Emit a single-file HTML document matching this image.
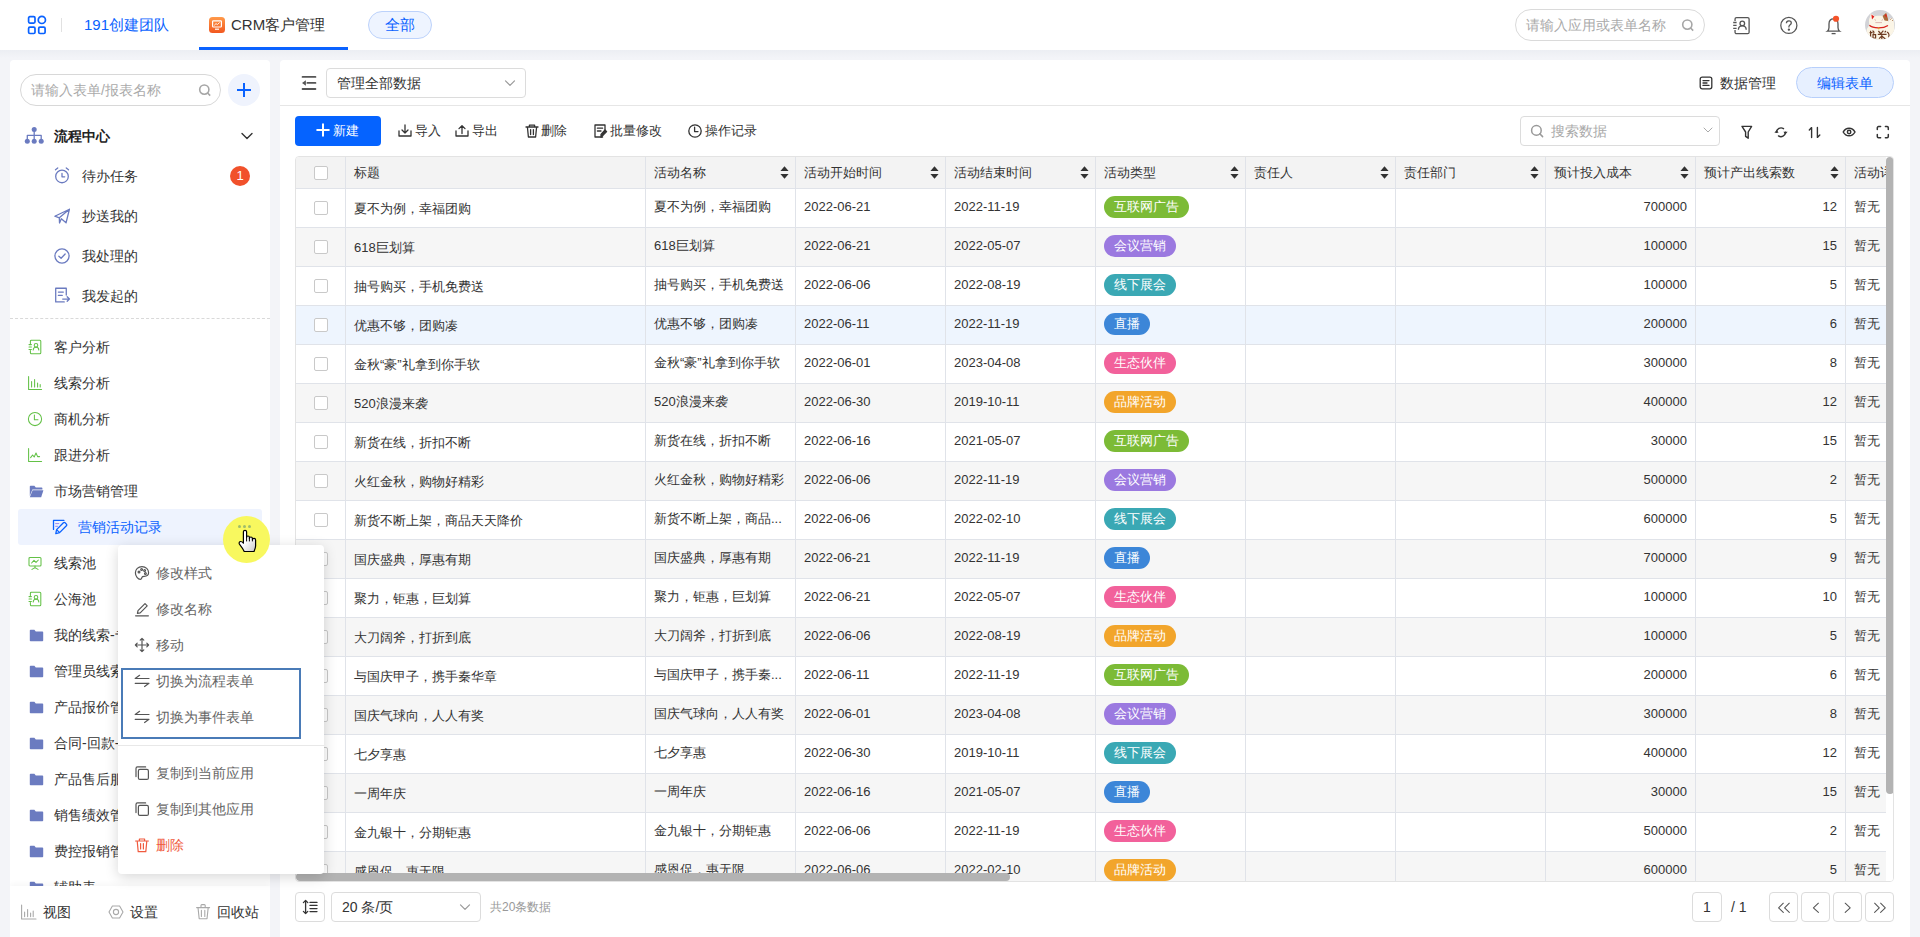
<!DOCTYPE html>
<html><head><meta charset="utf-8"><title>CRM</title>
<style>
*{box-sizing:border-box;margin:0;padding:0}
html,body{width:1920px;height:937px;overflow:hidden}
body{background:#f3f4f8;font-family:"Liberation Sans",sans-serif;color:#333;position:relative}
.abs{position:absolute}
svg{display:block}
/* header */
#hdr{position:absolute;left:0;top:0;width:1920px;height:50px;background:#fff}
.t15{font-size:15px;line-height:20px;white-space:nowrap}
.t14{font-size:14px;line-height:20px;white-space:nowrap}
.t13{font-size:13px;line-height:18px;white-space:nowrap}
.t12{font-size:12px;line-height:16px;white-space:nowrap}
/* sidebar */
#side{position:absolute;left:10px;top:60px;width:260px;height:877px;background:#fff;border-radius:4px 4px 0 0;overflow:hidden}
.sitem{position:absolute;left:0;width:260px;height:36px}
.sitem .ic{position:absolute}
.sitem .tx{position:absolute;top:8px;font-size:14px;line-height:20px;color:#333;white-space:nowrap}
/* main */
#main{position:absolute;left:280px;top:60px;width:1630px;height:877px;background:#fff;border-radius:4px 4px 0 0}
/* table */
#tbl{position:absolute;left:295px;top:156px;width:1599px;height:726px;border:1px solid #e3e3e3;border-radius:4px;overflow:hidden;background:#fff}
.thead{position:absolute;left:0;top:0;width:1598px;height:32px;background:#f3f3f3;border-bottom:1px solid #e0e3e9}
.tr{position:absolute;left:0;width:1598px;height:39px;background:#fff;border-bottom:1px solid #e0e3e9}
.tr.odd{background:#f6f6f6}
.tr.hov{background:#eef5fe}
.cell{position:absolute;top:0;height:100%;border-right:1px solid #e0e3e9;font-size:13px;color:#333;white-space:nowrap;overflow:hidden;padding:0 8px;display:flex;align-items:center}
.cell span{position:relative}
.cell .dg{top:-2px}
.cell .cj{top:-1px}
.cell .tt{top:1px}
.th{justify-content:space-between;padding-right:6px}
.ck{justify-content:center;padding:0}
.cb{display:block;width:14px;height:14px;border:1px solid #c9c9c9;border-radius:2px;background:#fff}
.num{justify-content:flex-end}
.tag{display:inline-block;position:relative;top:-1px;height:22px;line-height:22px;border-radius:11px;padding:0 10px;color:#fff;font-size:13px;font-weight:normal}
.hscroll{position:absolute;left:0;top:716px;width:714px;height:8px;background:#b3b3b3;border-radius:4px}
.vtrack{position:absolute;left:1590px;top:0;width:8px;height:724px;background:#fff}
.vscroll{position:absolute;left:1590px;top:0;width:8px;height:637px;background:#b3b3b3;border-radius:4px}
.btn30{position:absolute;width:29px;height:30px;border:1px solid #dcdcdc;border-radius:4px;background:#fff}

#hshadow{position:absolute;left:0;top:50px;width:1920px;height:8px;background:linear-gradient(#eceef3,#f3f4f8)}

</style></head>
<body>
<!-- ============ HEADER ============ -->
<div id="hdr">
  <svg class="abs" style="left:26px;top:14px" width="22" height="22" viewBox="0 0 22 22" fill="none" stroke="#0a62ff" stroke-width="1.7">
    <rect x="2.6" y="2.7" width="6.4" height="6.4" rx="1.3"/>
    <circle cx="15.85" cy="5.9" r="3.6"/>
    <rect x="2.6" y="13.1" width="6.4" height="6.4" rx="1.3"/>
    <rect x="12.7" y="13.1" width="6.4" height="6.4" rx="1.3"/>
  </svg>
  <div class="abs" style="left:61px;top:18px;width:1px;height:14px;background:#e1e1e1"></div>
  <div class="abs t15" style="left:84px;top:15px;color:#0a62ff">191创建团队</div>
  <svg class="abs" style="left:209px;top:17px" width="16" height="16" viewBox="0 0 16 16">
    <defs><linearGradient id="og" x1="0" y1="0" x2="0" y2="1"><stop offset="0" stop-color="#ff9a4a"/><stop offset="1" stop-color="#f2571f"/></linearGradient></defs>
    <rect x="0" y="0" width="16" height="16" rx="3.5" fill="url(#og)"/>
    <rect x="3.6" y="3.8" width="8.8" height="6.2" rx="0.8" fill="none" stroke="#fff" stroke-width="1.2"/>
    <path d="M5.2 8.4 L7 6.6 L8.4 7.6 L10.6 5.4" fill="none" stroke="#fff" stroke-width="0.9"/>
    <path d="M6 12.2 H10" stroke="#fff" stroke-width="1.2"/>
  </svg>
  <div class="abs t15" style="left:231px;top:15px;color:#333">CRM客户管理</div>
  <div class="abs" style="left:199px;top:47px;width:149px;height:3px;background:#0a62ff"></div>
  <div class="abs t15" style="left:368px;top:11px;width:64px;height:28px;border:1px solid #bcd2fb;background:#eef4ff;border-radius:14px;color:#0a62ff;text-align:center;line-height:26px">全部</div>

  <div class="abs" style="left:1515px;top:9px;width:190px;height:32px;border:1px solid #dadada;border-radius:16px"></div>
  <div class="abs t14" style="left:1526px;top:15px;color:#aaa">请输入应用或表单名称</div>
  <svg class="abs" style="left:1681px;top:18px" width="14" height="14" viewBox="0 0 14 14" fill="none" stroke="#a6a6a6" stroke-width="1.6">
    <circle cx="6.3" cy="6.6" r="4.6"/><path d="M9.6 10 L12.2 12.6"/>
  </svg>

  <svg class="abs" style="left:1730px;top:14px" width="22" height="22" viewBox="0 0 22 22" fill="none" stroke="#555" stroke-width="1.3">
    <path d="M5.05 7 V5.1 a1.5 1.5 0 0 1 1.5 -1.5 H17.6 a1.5 1.5 0 0 1 1.5 1.5 V18.2 a1.5 1.5 0 0 1 -1.5 1.5 H6.55 a1.5 1.5 0 0 1 -1.5 -1.5 V16"/>
    <path d="M3.2 8.5 H6.6 M3.2 11.4 H6.6 M3.2 14.3 H6.6"/>
    <circle cx="12.3" cy="9.4" r="2.3"/>
    <path d="M8.4 15.8 C8.4 13.2 10 11.8 12.3 11.8 C14.6 11.8 16.2 13.2 16.2 15.8"/>
  </svg>
  <svg class="abs" style="left:1778px;top:14px" width="22" height="22" viewBox="0 0 22 22" fill="none" stroke="#555" stroke-width="1.25">
    <circle cx="10.85" cy="11.4" r="8.05"/>
    <path d="M8.4 9.2 C8.4 7.6 9.6 6.8 10.9 6.8 C12.3 6.8 13.3 7.7 13.3 8.9 C13.3 10.6 10.9 10.9 10.9 12.8 V13.4"/>
    <circle cx="10.9" cy="15.6" r="0.55" fill="#555"/>
  </svg>
  <svg class="abs" style="left:1822px;top:14px" width="22" height="22" viewBox="0 0 22 22" fill="none" stroke="#555" stroke-width="1.3">
    <path d="M5.4 17.2 C6.6 16.4 7 15.6 7 13.6 V10 C7 6.8 9 4.8 11.5 4.8 C14 4.8 16 6.8 16 10 V13.6 C16 15.6 16.4 16.4 17.6 17.2 Z"/>
    <path d="M9.6 19.6 H13.6"/>
    <circle cx="14" cy="4.75" r="3.1" fill="#f4532a" stroke="none"/>
  </svg>
  <svg class="abs" style="left:1865px;top:10px" width="30" height="30" viewBox="0 0 30 30">
    <defs><clipPath id="avc"><circle cx="15" cy="15" r="15"/></clipPath></defs>
    <g clip-path="url(#avc)">
    <rect width="30" height="30" fill="#d2d3d7"/>
    <path d="M1.2 30 L1.6 20 C2.4 17.5 3.8 16 4.4 15 C3.6 12 3.8 9 5 7 L5.8 3.4 L10 6.2 C12 5.6 16 5.6 18 6 L21.2 2.8 L22.8 8 C23.4 9.5 23.4 11 23.2 12.5 L24.4 9.4 C25.2 7.8 27.4 7.8 28 9.2 C29.2 12 29.6 16 29.2 20 L28.8 30 Z" fill="#fbf5e6"/>
    <path d="M6.4 4.6 L9.4 6.6 L7 9.4 Z" fill="#e41f1c"/>
    <path d="M17.6 6 L21.2 2.8 L22.8 8 C23.2 9.4 23.2 10.4 22.8 11 L19.6 10.4 C18.8 9 18.2 7.4 17.6 6Z" fill="#a96b3d"/>
    <path d="M19.6 5.4 L21.2 3.8 L22 7.8 Z" fill="#e41f1c"/>
    <path d="M9.6 9.6 L11 10.4 M16.6 10.4 L18 9.6 M10.4 12.6 H17" stroke="#c98b8b" stroke-width="0.6"/>
    <path d="M4.4 15.2 C8 18.6 18 18.8 23 15.4" fill="none" stroke="#d9231d" stroke-width="1.2"/>
    <circle cx="13.6" cy="18.4" r="0.9" fill="#e0a92c"/>
    <path d="M25.4 9.6 L26.4 8.6 M27 11 L27.8 10.2" stroke="#a96b3d" stroke-width="0.9"/>
    <path d="M5.6 20.8 V28 M4.6 22.6 H7.6 M7.4 20.8 C9 21 9.4 22.4 8.4 23.6 M8 24.6 H10.6 V28 H8Z M13.4 21 L15.4 23.4 M18.4 20.6 L15 24.6 M12.8 24.4 H21.6 M16.8 24.6 V29 M14 28.6 L16.8 26 L20.4 29 M19.6 22.4 L21 21 M22 22 C24 23 24.4 25 23.6 27.6" stroke="#6e3b21" stroke-width="1.2" fill="none"/>
    </g>
  </svg>
</div>

<div id="hshadow"></div>
<!-- ============ SIDEBAR ============ -->
<div id="side">
  <div class="abs" style="left:10px;top:14px;width:201px;height:32px;border:1px solid #d8d8d8;border-radius:16px"></div>
  <div class="abs t14" style="left:21px;top:20px;color:#aaa">请输入表单/报表名称</div>
  <svg class="abs" style="left:188px;top:23px" width="14" height="14" viewBox="0 0 14 14" fill="none" stroke="#a6a6a6" stroke-width="1.6">
    <circle cx="6.3" cy="6.6" r="4.6"/><path d="M9.6 10 L12.2 12.6"/>
  </svg>
  <div class="abs" style="left:218px;top:14px;width:32px;height:32px;border-radius:16px;background:#eff3fd"></div>
  <svg class="abs" style="left:226px;top:22px" width="16" height="16" viewBox="0 0 16 16" stroke="#0a62ff" stroke-width="2"><path d="M8 1 V15 M1 8 H15"/></svg>

  <svg class="abs" style="left:10px;top:62px" width="30" height="28" viewBox="0 0 30 28" fill="#6b7bc0" stroke="none" stroke-width="1.3" stroke-linecap="round" stroke-linejoin="round"><circle cx="14.2" cy="7.6" r="2.5"/><circle cx="7.3" cy="19.3" r="2.5"/><circle cx="14.2" cy="19.3" r="2.5"/><circle cx="21.2" cy="19.3" r="2.5"/></svg>
<svg class="abs" style="left:10px;top:62px" width="30" height="28" viewBox="0 0 30 28" fill="none" stroke="#6b7bc0" stroke-width="1.3" stroke-linecap="round" stroke-linejoin="round"><path d="M14.2 7.6 V19.3 M7.3 19.3 V13.4 H21.2 V19.3"/></svg>
<div class="abs" style="left:44px;top:66px;font-size:14px;line-height:20px;color:#222;white-space:nowrap;font-weight:bold">流程中心</div>
<svg class="abs" style="left:230px;top:70px" width="14" height="12" viewBox="0 0 14 12" fill="none" stroke="#333" stroke-width="1.4" stroke-linecap="round" stroke-linejoin="round"><path d="M2 3.5 L7 8.5 L12 3.5"/></svg>
<svg class="abs" style="left:43px;top:106px" width="18" height="18" viewBox="0 0 16 16" fill="none" stroke="#6b7bc0" stroke-width="1.15" stroke-linecap="round" stroke-linejoin="round"><circle cx="8" cy="9.3" r="5.6"/><path d="M8 6.6 V9.6 H10.4 M2.2 3.4 L4.2 1.8 M13.8 3.4 L11.8 1.8"/></svg>
<div class="abs" style="left:72px;top:105.5px;font-size:14px;line-height:20px;color:#333;white-space:nowrap;">待办任务</div>
<svg class="abs" style="left:43px;top:147px" width="18" height="18" viewBox="0 0 16 16" fill="none" stroke="#6b7bc0" stroke-width="1.15" stroke-linecap="round" stroke-linejoin="round"><path d="M1.6 8.2 L14.6 2 L11.6 14 L7.4 10.4 L5.8 14.2 L5.6 9.6 Z M5.6 9.6 L14.6 2"/></svg>
<div class="abs" style="left:72px;top:146px;font-size:14px;line-height:20px;color:#333;white-space:nowrap;">抄送我的</div>
<svg class="abs" style="left:43px;top:187px" width="18" height="18" viewBox="0 0 16 16" fill="none" stroke="#6b7bc0" stroke-width="1.15" stroke-linecap="round" stroke-linejoin="round"><circle cx="8" cy="8" r="6.3"/><path d="M5.2 8.2 L7.2 10 L10.8 6.2"/></svg>
<div class="abs" style="left:72px;top:186px;font-size:14px;line-height:20px;color:#333;white-space:nowrap;">我处理的</div>
<svg class="abs" style="left:43px;top:226px" width="18" height="18" viewBox="0 0 16 16" fill="none" stroke="#6b7bc0" stroke-width="1.15" stroke-linecap="round" stroke-linejoin="round"><path d="M11.8 8 V2 H2.4 V14.2 H10 M4.8 5.4 H9.2 M4.8 8.4 H8.2 M8.6 11.6 H14.6 L12.6 9.6 M14.6 11.6 L12.6 13.6"/></svg>
<div class="abs" style="left:72px;top:225.5px;font-size:14px;line-height:20px;color:#333;white-space:nowrap;">我发起的</div>
<div class="abs" style="left:220px;top:106px;width:20px;height:20px;border-radius:10px;background:#f1512b;color:#fff;font-size:13px;line-height:20px;text-align:center">1</div>
<div class="abs" style="left:0;top:258px;width:260px;height:0;border-top:1px dashed #d9d9d9"></div>
<svg class="abs" style="left:17px;top:279px" width="16" height="16" viewBox="0 0 16 16" fill="none" stroke="#63c146" stroke-width="1.05" stroke-linecap="round" stroke-linejoin="round"><path d="M3.4 4.5 V2.2 a1 1 0 0 1 1 -1 H12.8 a1 1 0 0 1 1 1 V13.8 a1 1 0 0 1 -1 1 H4.4 a1 1 0 0 1 -1 -1 V11.5 M2 5.6 H4.4 M2 8 H4.4 M2 10.4 H4.4"/><circle cx="9" cy="6.2" r="1.8"/><path d="M6.2 11 C6.2 9 7.4 8.2 9 8.2 C10.6 8.2 11.8 9 11.8 11"/></svg>
<div class="abs" style="left:44px;top:277px;font-size:14px;line-height:20px;color:#333;white-space:nowrap;">客户分析</div>
<svg class="abs" style="left:17px;top:315px" width="16" height="16" viewBox="0 0 16 16" fill="none" stroke="#63c146" stroke-width="1.05" stroke-linecap="round" stroke-linejoin="round"><path d="M1.6 1.6 V14.4 H14.6 M4.6 12 V6.6 M7.6 12 V4.4 M10.6 12 V8 M13.2 12 V9.4"/></svg>
<div class="abs" style="left:44px;top:313px;font-size:14px;line-height:20px;color:#333;white-space:nowrap;">线索分析</div>
<svg class="abs" style="left:17px;top:351px" width="16" height="16" viewBox="0 0 16 16" fill="none" stroke="#63c146" stroke-width="1.05" stroke-linecap="round" stroke-linejoin="round"><circle cx="8" cy="8" r="6.6"/><path d="M7.4 4 V8.8 H11"/></svg>
<div class="abs" style="left:44px;top:349px;font-size:14px;line-height:20px;color:#333;white-space:nowrap;">商机分析</div>
<svg class="abs" style="left:17px;top:387px" width="16" height="16" viewBox="0 0 16 16" fill="none" stroke="#63c146" stroke-width="1.05" stroke-linecap="round" stroke-linejoin="round"><path d="M1.6 1.6 V14.4 H14.6 M3.6 10.6 L5.6 8 L7.2 10 L9 6 L10.6 9.6 L12.6 9.6"/></svg>
<div class="abs" style="left:44px;top:385px;font-size:14px;line-height:20px;color:#333;white-space:nowrap;">跟进分析</div>
<svg class="abs" style="left:18.5px;top:424.5px" width="15" height="13" viewBox="0 0 15 13" fill="#6b7bc0" stroke="none" stroke-width="1.3" stroke-linecap="round" stroke-linejoin="round"><path d="M0.8 1.6 a0.8 0.8 0 0 1 0.8 -0.8 H5.4 L6.8 2.4 H12.6 a0.8 0.8 0 0 1 0.8 0.8 V4.4 H3.4 L0.8 11 Z" /><path d="M3.6 5.2 H14.4 L12.2 12.2 H0.8 Z"/></svg>
<div class="abs" style="left:44px;top:421px;font-size:14px;line-height:20px;color:#333;white-space:nowrap;">市场营销管理</div>
<svg class="abs" style="left:17px;top:495px" width="16" height="16" viewBox="0 0 16 16" fill="none" stroke="#63c146" stroke-width="1.05" stroke-linecap="round" stroke-linejoin="round"><rect x="2" y="2.4" width="12" height="8.6" rx="1"/><path d="M4.6 8 L7 5.4 L9 7.4 L11.4 5 M8 11 V13 M5 14.4 L8 12.6 L11 14.4"/></svg>
<div class="abs" style="left:44px;top:493px;font-size:14px;line-height:20px;color:#333;white-space:nowrap;">线索池</div>
<svg class="abs" style="left:17px;top:531px" width="16" height="16" viewBox="0 0 16 16" fill="none" stroke="#63c146" stroke-width="1.05" stroke-linecap="round" stroke-linejoin="round"><path d="M3.4 4.5 V2.2 a1 1 0 0 1 1 -1 H12.8 a1 1 0 0 1 1 1 V13.8 a1 1 0 0 1 -1 1 H4.4 a1 1 0 0 1 -1 -1 V11.5 M2 5.6 H4.4 M2 8 H4.4 M2 10.4 H4.4"/><circle cx="9" cy="6.2" r="1.8"/><path d="M6.2 11 C6.2 9 7.4 8.2 9 8.2 C10.6 8.2 11.8 9 11.8 11"/></svg>
<div class="abs" style="left:44px;top:529px;font-size:14px;line-height:20px;color:#333;white-space:nowrap;">公海池</div>
<svg class="abs" style="left:18.5px;top:568.5px" width="15" height="13" viewBox="0 0 15 13" fill="#6b7bc0" stroke="none" stroke-width="1.3" stroke-linecap="round" stroke-linejoin="round"><path d="M0.8 1.6 a0.8 0.8 0 0 1 0.8 -0.8 H5.4 L6.8 2.4 H13.4 a0.8 0.8 0 0 1 0.8 0.8 V11.4 a0.8 0.8 0 0 1 -0.8 0.8 H1.6 a0.8 0.8 0 0 1 -0.8 -0.8 Z"/></svg>
<div class="abs" style="left:44px;top:565px;font-size:14px;line-height:20px;color:#333;white-space:nowrap;">我的线索-专员</div>
<svg class="abs" style="left:18.5px;top:604.5px" width="15" height="13" viewBox="0 0 15 13" fill="#6b7bc0" stroke="none" stroke-width="1.3" stroke-linecap="round" stroke-linejoin="round"><path d="M0.8 1.6 a0.8 0.8 0 0 1 0.8 -0.8 H5.4 L6.8 2.4 H13.4 a0.8 0.8 0 0 1 0.8 0.8 V11.4 a0.8 0.8 0 0 1 -0.8 0.8 H1.6 a0.8 0.8 0 0 1 -0.8 -0.8 Z"/></svg>
<div class="abs" style="left:44px;top:601px;font-size:14px;line-height:20px;color:#333;white-space:nowrap;">管理员线索管理</div>
<svg class="abs" style="left:18.5px;top:640.5px" width="15" height="13" viewBox="0 0 15 13" fill="#6b7bc0" stroke="none" stroke-width="1.3" stroke-linecap="round" stroke-linejoin="round"><path d="M0.8 1.6 a0.8 0.8 0 0 1 0.8 -0.8 H5.4 L6.8 2.4 H13.4 a0.8 0.8 0 0 1 0.8 0.8 V11.4 a0.8 0.8 0 0 1 -0.8 0.8 H1.6 a0.8 0.8 0 0 1 -0.8 -0.8 Z"/></svg>
<div class="abs" style="left:44px;top:637px;font-size:14px;line-height:20px;color:#333;white-space:nowrap;">产品报价管理</div>
<svg class="abs" style="left:18.5px;top:676.5px" width="15" height="13" viewBox="0 0 15 13" fill="#6b7bc0" stroke="none" stroke-width="1.3" stroke-linecap="round" stroke-linejoin="round"><path d="M0.8 1.6 a0.8 0.8 0 0 1 0.8 -0.8 H5.4 L6.8 2.4 H13.4 a0.8 0.8 0 0 1 0.8 0.8 V11.4 a0.8 0.8 0 0 1 -0.8 0.8 H1.6 a0.8 0.8 0 0 1 -0.8 -0.8 Z"/></svg>
<div class="abs" style="left:44px;top:673px;font-size:14px;line-height:20px;color:#333;white-space:nowrap;">合同-回款-开票</div>
<svg class="abs" style="left:18.5px;top:712.5px" width="15" height="13" viewBox="0 0 15 13" fill="#6b7bc0" stroke="none" stroke-width="1.3" stroke-linecap="round" stroke-linejoin="round"><path d="M0.8 1.6 a0.8 0.8 0 0 1 0.8 -0.8 H5.4 L6.8 2.4 H13.4 a0.8 0.8 0 0 1 0.8 0.8 V11.4 a0.8 0.8 0 0 1 -0.8 0.8 H1.6 a0.8 0.8 0 0 1 -0.8 -0.8 Z"/></svg>
<div class="abs" style="left:44px;top:709px;font-size:14px;line-height:20px;color:#333;white-space:nowrap;">产品售后服务</div>
<svg class="abs" style="left:18.5px;top:748.5px" width="15" height="13" viewBox="0 0 15 13" fill="#6b7bc0" stroke="none" stroke-width="1.3" stroke-linecap="round" stroke-linejoin="round"><path d="M0.8 1.6 a0.8 0.8 0 0 1 0.8 -0.8 H5.4 L6.8 2.4 H13.4 a0.8 0.8 0 0 1 0.8 0.8 V11.4 a0.8 0.8 0 0 1 -0.8 0.8 H1.6 a0.8 0.8 0 0 1 -0.8 -0.8 Z"/></svg>
<div class="abs" style="left:44px;top:745px;font-size:14px;line-height:20px;color:#333;white-space:nowrap;">销售绩效管理</div>
<svg class="abs" style="left:18.5px;top:784.5px" width="15" height="13" viewBox="0 0 15 13" fill="#6b7bc0" stroke="none" stroke-width="1.3" stroke-linecap="round" stroke-linejoin="round"><path d="M0.8 1.6 a0.8 0.8 0 0 1 0.8 -0.8 H5.4 L6.8 2.4 H13.4 a0.8 0.8 0 0 1 0.8 0.8 V11.4 a0.8 0.8 0 0 1 -0.8 0.8 H1.6 a0.8 0.8 0 0 1 -0.8 -0.8 Z"/></svg>
<div class="abs" style="left:44px;top:781px;font-size:14px;line-height:20px;color:#333;white-space:nowrap;">费控报销管理</div>
<svg class="abs" style="left:18.5px;top:820.5px" width="15" height="13" viewBox="0 0 15 13" fill="#6b7bc0" stroke="none" stroke-width="1.3" stroke-linecap="round" stroke-linejoin="round"><path d="M0.8 1.6 a0.8 0.8 0 0 1 0.8 -0.8 H5.4 L6.8 2.4 H13.4 a0.8 0.8 0 0 1 0.8 0.8 V11.4 a0.8 0.8 0 0 1 -0.8 0.8 H1.6 a0.8 0.8 0 0 1 -0.8 -0.8 Z"/></svg>
<div class="abs" style="left:44px;top:817px;font-size:14px;line-height:20px;color:#333;white-space:nowrap;">辅助表</div>
<div class="abs" style="left:8px;top:449px;width:244px;height:36px;background:#eef3fe;border-radius:3px"></div>
<svg class="abs" style="left:42px;top:459px" width="17" height="17" viewBox="0 0 17 17" fill="none" stroke="#0a62ff" stroke-width="1.3" stroke-linecap="round" stroke-linejoin="round"><path d="M1.5 10.4 V1.4 H11.9 M3.8 14.6 L4.6 10.6 L11.4 3.8 a1.2 1.2 0 0 1 1.7 0 L14.4 5.1 a1.2 1.2 0 0 1 0 1.7 L7.6 13.6 Z M4.6 10.6 L7.6 13.6"/></svg>
<svg class="abs" style="left:42px;top:459px" width="17" height="17" viewBox="0 0 17 17" fill="none" stroke="#8a7cf0" stroke-width="0.9" stroke-linecap="round" stroke-linejoin="round"><path d="M3.6 4.6 H6.8 M3.6 7.3 H5.5"/></svg>
<div class="abs" style="left:68px;top:457px;font-size:14px;line-height:20px;color:#0a62ff;white-space:nowrap;">营销活动记录</div>
<div class="abs" style="left:0;top:826px;width:260px;height:51px;background:#fff;box-shadow:0 -2px 6px rgba(0,0,0,0.04)"></div>
<svg class="abs" style="left:10px;top:844px" width="17" height="16" viewBox="0 0 17 16" fill="none" stroke="#a9a9a9" stroke-width="1.1" stroke-linecap="round" stroke-linejoin="round"><path d="M1.6 1 V15 H16 M4.6 12.6 V8 M7.6 12.6 V5.6 M10.6 12.6 V9 M13.2 12.6 V7"/></svg>
<div class="abs" style="left:33px;top:842px;font-size:14px;line-height:20px;color:#333;white-space:nowrap;">视图</div>
<svg class="abs" style="left:98px;top:844px" width="16" height="16" viewBox="0 0 16 16" fill="none" stroke="#a9a9a9" stroke-width="1.1" stroke-linecap="round" stroke-linejoin="round"><path d="M4.4 2 H11.6 L15 8 L11.6 14 H4.4 L1 8 Z"/><circle cx="8" cy="8" r="2.6"/></svg>
<div class="abs" style="left:120px;top:842px;font-size:14px;line-height:20px;color:#333;white-space:nowrap;">设置</div>
<svg class="abs" style="left:185px;top:843px" width="16" height="18" viewBox="0 0 16 18" fill="none" stroke="#a9a9a9" stroke-width="1.1" stroke-linecap="round" stroke-linejoin="round"><path d="M1.6 4.6 H14.6 M6 4.4 V2.4 a0.8 0.8 0 0 1 0.8 -0.8 H9.4 a0.8 0.8 0 0 1 0.8 0.8 V4.4 M3 4.6 L4.2 15.8 H12 L13.2 4.6 M6.4 7.4 V13.4 M9.8 7.4 V13.4"/></svg>
<div class="abs" style="left:207px;top:842px;font-size:14px;line-height:20px;color:#333;white-space:nowrap;">回收站</div>
</div>

<!-- ============ MAIN ============ -->
<div id="main">
  <div class="abs" style="left:0;top:45px;width:1630px;height:1px;background:#e6e6e6"></div>
<svg class="abs" style="left:20px;top:15px" width="18" height="16" viewBox="0 0 18 16" fill="none" stroke="#555" stroke-width="1.9" stroke-linecap="round" stroke-linejoin="round"><path d="M2.6 1.9 H15.4 M7.4 7.9 H15.4 M2.6 14 H15.4"/></svg>
<svg class="abs" style="left:20px;top:15px" width="18" height="16" viewBox="0 0 18 16" fill="#555" stroke="none" stroke-width="1.3" stroke-linecap="round" stroke-linejoin="round"><path d="M2 8 L5.9 5.3 V10.7 Z"/></svg>
<div class="abs" style="left:46px;top:8px;width:200px;height:30px;border:1px solid #dcdcdc;border-radius:4px"></div>
<div class="abs" style="left:57px;top:13px;font-size:14px;line-height:20px;color:#333;white-space:nowrap;">管理全部数据</div>
<svg class="abs" style="left:223px;top:17px" width="14" height="12" viewBox="0 0 14 12" fill="none" stroke="#999" stroke-width="1.2" stroke-linecap="round" stroke-linejoin="round"><path d="M2.5 3.8 L7 8.3 L11.5 3.8"/></svg>
<svg class="abs" style="left:1418px;top:15px" width="16" height="16" viewBox="0 0 16 16" fill="none" stroke="#333" stroke-width="1.3" stroke-linecap="round" stroke-linejoin="round"><rect x="2.2" y="2.2" width="11.6" height="11.6" rx="2"/><path d="M5 5.6 H11 M5 8 H9 M5 10.4 H11"/></svg>
<div class="abs" style="left:1440px;top:13px;font-size:14px;line-height:20px;color:#333;white-space:nowrap;">数据管理</div>
<div class="abs" style="left:1516px;top:7px;width:98px;height:31px;border:1px solid #b7cffb;background:#e7f0ff;border-radius:16px;text-align:center;font-size:14px;line-height:31px;color:#0a62ff">编辑表单</div>
<div class="abs" style="left:15px;top:56px;width:86px;height:30px;background:#0563ff;border-radius:4px"></div>
<svg class="abs" style="left:36px;top:63px" width="14" height="14" viewBox="0 0 14 14" fill="none" stroke="#fff" stroke-width="2" stroke-linecap="round" stroke-linejoin="round"><path d="M7 1.2 V12.8 M1.2 7 H12.8"/></svg>
<div class="abs" style="left:53px;top:61px;font-size:13px;line-height:20px;color:#fff;white-space:nowrap;">新建</div>
<svg class="abs" style="left:117px;top:63px" width="16" height="16" viewBox="0 0 16 16" fill="none" stroke="#333" stroke-width="1.3" stroke-linecap="round" stroke-linejoin="round"><path d="M2 8 V13 H14 V8 M8 2 V10 M5 7 L8 10 L11 7"/></svg>
<div class="abs" style="left:135px;top:61px;font-size:13px;line-height:20px;color:#333;white-space:nowrap;">导入</div>
<svg class="abs" style="left:174px;top:63px" width="16" height="16" viewBox="0 0 16 16" fill="none" stroke="#333" stroke-width="1.3" stroke-linecap="round" stroke-linejoin="round"><path d="M2 8 V13 H14 V8 M8 10.6 V2.6 M5 5.6 L8 2.6 L11 5.6"/></svg>
<div class="abs" style="left:192px;top:61px;font-size:13px;line-height:20px;color:#333;white-space:nowrap;">导出</div>
<svg class="abs" style="left:244px;top:63px" width="16" height="16" viewBox="0 0 16 16" fill="none" stroke="#333" stroke-width="1.3" stroke-linecap="round" stroke-linejoin="round"><path d="M2 4 H14 M5.4 4 V2.2 H10.6 V4 M3.4 4 L4.4 14 H11.6 L12.6 4 M6.6 6.6 V11.6 M9.4 6.6 V11.6"/></svg>
<div class="abs" style="left:261px;top:61px;font-size:13px;line-height:20px;color:#333;white-space:nowrap;">删除</div>
<svg class="abs" style="left:312px;top:63px" width="16" height="16" viewBox="0 0 16 16" fill="none" stroke="#333" stroke-width="1.3" stroke-linecap="round" stroke-linejoin="round"><path d="M10.6 14 H3 V2 H13 V9 M5.4 5.2 H10.6 M5.4 8 H9"/><path d="M9 14.2 L14.6 8.6 L13 7 L9 11.4 Z" fill="#333"/></svg>
<div class="abs" style="left:330px;top:61px;font-size:13px;line-height:20px;color:#333;white-space:nowrap;">批量修改</div>
<svg class="abs" style="left:407px;top:63px" width="16" height="16" viewBox="0 0 16 16" fill="none" stroke="#333" stroke-width="1.3" stroke-linecap="round" stroke-linejoin="round"><circle cx="8" cy="8" r="6.2"/><path d="M7.6 4.2 V8.6 H11"/></svg>
<div class="abs" style="left:425px;top:61px;font-size:13px;line-height:20px;color:#333;white-space:nowrap;">操作记录</div>
<div class="abs" style="left:1240px;top:56px;width:200px;height:30px;border:1px solid #dcdcdc;border-radius:4px"></div>
<svg class="abs" style="left:1250px;top:64px" width="14" height="14" viewBox="0 0 14 14" fill="none" stroke="#999" stroke-width="1.5" stroke-linecap="round" stroke-linejoin="round"><circle cx="6.4" cy="6.4" r="4.8"/><path d="M9.8 9.8 L12.6 12.6"/></svg>
<div class="abs" style="left:1271px;top:61px;font-size:14px;line-height:20px;color:#aaa;white-space:nowrap;">搜索数据</div>
<svg class="abs" style="left:1422px;top:65px" width="12" height="10" viewBox="0 0 12 10" fill="none" stroke="#aaa" stroke-width="1" stroke-linecap="round" stroke-linejoin="round"><path d="M2 3 L6 7 L10 3"/></svg>
<svg class="abs" style="left:1459px;top:64px" width="16" height="16" viewBox="0 0 16 16" fill="none" stroke="#333" stroke-width="1.4" stroke-linecap="round" stroke-linejoin="round"><path d="M3 2.4 H12.6 L9.2 8 V14.2 L6.6 12.4 V8 Z"/></svg>
<svg class="abs" style="left:1493px;top:64px" width="16" height="16" viewBox="0 0 16 16" fill="none" stroke="#333" stroke-width="1.4" stroke-linecap="round" stroke-linejoin="round"><path d="M3.6 8.3 A4.4 4.4 0 0 1 10.5 4.7 M12.4 8.3 A4.4 4.4 0 0 1 5.5 11.9"/><path d="M1.4 8.8 L3.6 6 L5.6 8.8 Z M14.6 7.8 L12.4 10.6 L10.4 7.8 Z" fill="#333" stroke="none"/></svg>
<svg class="abs" style="left:1526px;top:64px" width="16" height="16" viewBox="0 0 16 16" fill="none" stroke="#333" stroke-width="1.4" stroke-linecap="round" stroke-linejoin="round"><path d="M5.6 13.6 V3.6 L3.3 6 M11.4 3.4 V13.4 L13.8 11"/></svg>
<svg class="abs" style="left:1561px;top:64px" width="16" height="16" viewBox="0 0 16 16" fill="none" stroke="#333" stroke-width="1.5" stroke-linecap="round" stroke-linejoin="round"><path d="M2.2 8 C3.8 5.2 5.8 4.2 8.1 4.2 C10.4 4.2 12.4 5.2 14 8 C12.4 10.8 10.4 11.8 8.1 11.8 C5.8 11.8 3.8 10.8 2.2 8 Z"/><circle cx="8.1" cy="8" r="1.7"/></svg>
<svg class="abs" style="left:1595px;top:64px" width="16" height="16" viewBox="0 0 16 16" fill="none" stroke="#333" stroke-width="1.5" stroke-linecap="round" stroke-linejoin="round"><path d="M2.3 5.6 V3.8 a1.2 1.2 0 0 1 1.2 -1.2 H5.6 M10.4 2.6 H12.1 a1.2 1.2 0 0 1 1.2 1.2 V5.6 M13.3 10.4 V12.6 a1.2 1.2 0 0 1 -1.2 1.2 H10.4 M5.6 13.8 H3.5 a1.2 1.2 0 0 1 -1.2 -1.2 V10.4"/></svg>
</div>
<div id="tbl">
<div class="thead">
<div class="cell ck" style="left:0;width:50px"><i class="cb"></i></div>
<div class="cell th" style="left:50px;width:300px"><span>标题</span></div>
<div class="cell th" style="left:350px;width:150px"><span>活动名称</span><svg class="sort" width="9" height="13" viewBox="0 0 9 13"><path d="M4.5 0.3L8.6 5H0.4Z M4.5 12.7L8.6 8H0.4Z" fill="#333"/></svg></div>
<div class="cell th" style="left:500px;width:150px"><span>活动开始时间</span><svg class="sort" width="9" height="13" viewBox="0 0 9 13"><path d="M4.5 0.3L8.6 5H0.4Z M4.5 12.7L8.6 8H0.4Z" fill="#333"/></svg></div>
<div class="cell th" style="left:650px;width:150px"><span>活动结束时间</span><svg class="sort" width="9" height="13" viewBox="0 0 9 13"><path d="M4.5 0.3L8.6 5H0.4Z M4.5 12.7L8.6 8H0.4Z" fill="#333"/></svg></div>
<div class="cell th" style="left:800px;width:150px"><span>活动类型</span><svg class="sort" width="9" height="13" viewBox="0 0 9 13"><path d="M4.5 0.3L8.6 5H0.4Z M4.5 12.7L8.6 8H0.4Z" fill="#333"/></svg></div>
<div class="cell th" style="left:950px;width:150px"><span>责任人</span><svg class="sort" width="9" height="13" viewBox="0 0 9 13"><path d="M4.5 0.3L8.6 5H0.4Z M4.5 12.7L8.6 8H0.4Z" fill="#333"/></svg></div>
<div class="cell th" style="left:1100px;width:150px"><span>责任部门</span><svg class="sort" width="9" height="13" viewBox="0 0 9 13"><path d="M4.5 0.3L8.6 5H0.4Z M4.5 12.7L8.6 8H0.4Z" fill="#333"/></svg></div>
<div class="cell th" style="left:1250px;width:150px"><span>预计投入成本</span><svg class="sort" width="9" height="13" viewBox="0 0 9 13"><path d="M4.5 0.3L8.6 5H0.4Z M4.5 12.7L8.6 8H0.4Z" fill="#333"/></svg></div>
<div class="cell th" style="left:1400px;width:150px"><span>预计产出线索数</span><svg class="sort" width="9" height="13" viewBox="0 0 9 13"><path d="M4.5 0.3L8.6 5H0.4Z M4.5 12.7L8.6 8H0.4Z" fill="#333"/></svg></div>
<div class="cell th" style="left:1550px;width:150px"><span>活动详情</span></div>
</div>
<div class="tr" style="top:32px">
<div class="cell ck" style="left:0;width:50px"><i class="cb"></i></div>
<div class="cell" style="left:50px;width:300px"><span class="tt">夏不为例，幸福团购</span></div>
<div class="cell" style="left:350px;width:150px"><span class="cj">夏不为例，幸福团购</span></div>
<div class="cell" style="left:500px;width:150px"><span class="dg">2022-06-21</span></div>
<div class="cell" style="left:650px;width:150px"><span class="dg">2022-11-19</span></div>
<div class="cell" style="left:800px;width:150px"><b class="tag" style="background:#7cbb36">互联网广告</b></div>
<div class="cell" style="left:950px;width:150px"></div>
<div class="cell" style="left:1100px;width:150px"></div>
<div class="cell num" style="left:1250px;width:150px"><span class="dg">700000</span></div>
<div class="cell num" style="left:1400px;width:150px"><span class="dg">12</span></div>
<div class="cell" style="left:1550px;width:150px"><span class="cj">暂无</span></div>
</div>
<div class="tr odd" style="top:71px">
<div class="cell ck" style="left:0;width:50px"><i class="cb"></i></div>
<div class="cell" style="left:50px;width:300px"><span class="tt">618巨划算</span></div>
<div class="cell" style="left:350px;width:150px"><span class="cj">618巨划算</span></div>
<div class="cell" style="left:500px;width:150px"><span class="dg">2022-06-21</span></div>
<div class="cell" style="left:650px;width:150px"><span class="dg">2022-05-07</span></div>
<div class="cell" style="left:800px;width:150px"><b class="tag" style="background:#9b79e0">会议营销</b></div>
<div class="cell" style="left:950px;width:150px"></div>
<div class="cell" style="left:1100px;width:150px"></div>
<div class="cell num" style="left:1250px;width:150px"><span class="dg">100000</span></div>
<div class="cell num" style="left:1400px;width:150px"><span class="dg">15</span></div>
<div class="cell" style="left:1550px;width:150px"><span class="cj">暂无</span></div>
</div>
<div class="tr" style="top:110px">
<div class="cell ck" style="left:0;width:50px"><i class="cb"></i></div>
<div class="cell" style="left:50px;width:300px"><span class="tt">抽号购买，手机免费送</span></div>
<div class="cell" style="left:350px;width:150px"><span class="cj">抽号购买，手机免费送</span></div>
<div class="cell" style="left:500px;width:150px"><span class="dg">2022-06-06</span></div>
<div class="cell" style="left:650px;width:150px"><span class="dg">2022-08-19</span></div>
<div class="cell" style="left:800px;width:150px"><b class="tag" style="background:#3aa8b4">线下展会</b></div>
<div class="cell" style="left:950px;width:150px"></div>
<div class="cell" style="left:1100px;width:150px"></div>
<div class="cell num" style="left:1250px;width:150px"><span class="dg">100000</span></div>
<div class="cell num" style="left:1400px;width:150px"><span class="dg">5</span></div>
<div class="cell" style="left:1550px;width:150px"><span class="cj">暂无</span></div>
</div>
<div class="tr odd hov" style="top:149px">
<div class="cell ck" style="left:0;width:50px"><i class="cb"></i></div>
<div class="cell" style="left:50px;width:300px"><span class="tt">优惠不够，团购凑</span></div>
<div class="cell" style="left:350px;width:150px"><span class="cj">优惠不够，团购凑</span></div>
<div class="cell" style="left:500px;width:150px"><span class="dg">2022-06-11</span></div>
<div class="cell" style="left:650px;width:150px"><span class="dg">2022-11-19</span></div>
<div class="cell" style="left:800px;width:150px"><b class="tag" style="background:#3c86d8">直播</b></div>
<div class="cell" style="left:950px;width:150px"></div>
<div class="cell" style="left:1100px;width:150px"></div>
<div class="cell num" style="left:1250px;width:150px"><span class="dg">200000</span></div>
<div class="cell num" style="left:1400px;width:150px"><span class="dg">6</span></div>
<div class="cell" style="left:1550px;width:150px"><span class="cj">暂无</span></div>
</div>
<div class="tr" style="top:188px">
<div class="cell ck" style="left:0;width:50px"><i class="cb"></i></div>
<div class="cell" style="left:50px;width:300px"><span class="tt">金秋“豪”礼拿到你手软</span></div>
<div class="cell" style="left:350px;width:150px"><span class="cj">金秋“豪”礼拿到你手软</span></div>
<div class="cell" style="left:500px;width:150px"><span class="dg">2022-06-01</span></div>
<div class="cell" style="left:650px;width:150px"><span class="dg">2023-04-08</span></div>
<div class="cell" style="left:800px;width:150px"><b class="tag" style="background:#f2619b">生态伙伴</b></div>
<div class="cell" style="left:950px;width:150px"></div>
<div class="cell" style="left:1100px;width:150px"></div>
<div class="cell num" style="left:1250px;width:150px"><span class="dg">300000</span></div>
<div class="cell num" style="left:1400px;width:150px"><span class="dg">8</span></div>
<div class="cell" style="left:1550px;width:150px"><span class="cj">暂无</span></div>
</div>
<div class="tr odd" style="top:227px">
<div class="cell ck" style="left:0;width:50px"><i class="cb"></i></div>
<div class="cell" style="left:50px;width:300px"><span class="tt">520浪漫来袭</span></div>
<div class="cell" style="left:350px;width:150px"><span class="cj">520浪漫来袭</span></div>
<div class="cell" style="left:500px;width:150px"><span class="dg">2022-06-30</span></div>
<div class="cell" style="left:650px;width:150px"><span class="dg">2019-10-11</span></div>
<div class="cell" style="left:800px;width:150px"><b class="tag" style="background:#f2a52b">品牌活动</b></div>
<div class="cell" style="left:950px;width:150px"></div>
<div class="cell" style="left:1100px;width:150px"></div>
<div class="cell num" style="left:1250px;width:150px"><span class="dg">400000</span></div>
<div class="cell num" style="left:1400px;width:150px"><span class="dg">12</span></div>
<div class="cell" style="left:1550px;width:150px"><span class="cj">暂无</span></div>
</div>
<div class="tr" style="top:266px">
<div class="cell ck" style="left:0;width:50px"><i class="cb"></i></div>
<div class="cell" style="left:50px;width:300px"><span class="tt">新货在线，折扣不断</span></div>
<div class="cell" style="left:350px;width:150px"><span class="cj">新货在线，折扣不断</span></div>
<div class="cell" style="left:500px;width:150px"><span class="dg">2022-06-16</span></div>
<div class="cell" style="left:650px;width:150px"><span class="dg">2021-05-07</span></div>
<div class="cell" style="left:800px;width:150px"><b class="tag" style="background:#7cbb36">互联网广告</b></div>
<div class="cell" style="left:950px;width:150px"></div>
<div class="cell" style="left:1100px;width:150px"></div>
<div class="cell num" style="left:1250px;width:150px"><span class="dg">30000</span></div>
<div class="cell num" style="left:1400px;width:150px"><span class="dg">15</span></div>
<div class="cell" style="left:1550px;width:150px"><span class="cj">暂无</span></div>
</div>
<div class="tr odd" style="top:305px">
<div class="cell ck" style="left:0;width:50px"><i class="cb"></i></div>
<div class="cell" style="left:50px;width:300px"><span class="tt">火红金秋，购物好精彩</span></div>
<div class="cell" style="left:350px;width:150px"><span class="cj">火红金秋，购物好精彩</span></div>
<div class="cell" style="left:500px;width:150px"><span class="dg">2022-06-06</span></div>
<div class="cell" style="left:650px;width:150px"><span class="dg">2022-11-19</span></div>
<div class="cell" style="left:800px;width:150px"><b class="tag" style="background:#9b79e0">会议营销</b></div>
<div class="cell" style="left:950px;width:150px"></div>
<div class="cell" style="left:1100px;width:150px"></div>
<div class="cell num" style="left:1250px;width:150px"><span class="dg">500000</span></div>
<div class="cell num" style="left:1400px;width:150px"><span class="dg">2</span></div>
<div class="cell" style="left:1550px;width:150px"><span class="cj">暂无</span></div>
</div>
<div class="tr" style="top:344px">
<div class="cell ck" style="left:0;width:50px"><i class="cb"></i></div>
<div class="cell" style="left:50px;width:300px"><span class="tt">新货不断上架，商品天天降价</span></div>
<div class="cell" style="left:350px;width:150px"><span class="cj">新货不断上架，商品...</span></div>
<div class="cell" style="left:500px;width:150px"><span class="dg">2022-06-06</span></div>
<div class="cell" style="left:650px;width:150px"><span class="dg">2022-02-10</span></div>
<div class="cell" style="left:800px;width:150px"><b class="tag" style="background:#3aa8b4">线下展会</b></div>
<div class="cell" style="left:950px;width:150px"></div>
<div class="cell" style="left:1100px;width:150px"></div>
<div class="cell num" style="left:1250px;width:150px"><span class="dg">600000</span></div>
<div class="cell num" style="left:1400px;width:150px"><span class="dg">5</span></div>
<div class="cell" style="left:1550px;width:150px"><span class="cj">暂无</span></div>
</div>
<div class="tr odd" style="top:383px">
<div class="cell ck" style="left:0;width:50px"><i class="cb"></i></div>
<div class="cell" style="left:50px;width:300px"><span class="tt">国庆盛典，厚惠有期</span></div>
<div class="cell" style="left:350px;width:150px"><span class="cj">国庆盛典，厚惠有期</span></div>
<div class="cell" style="left:500px;width:150px"><span class="dg">2022-06-21</span></div>
<div class="cell" style="left:650px;width:150px"><span class="dg">2022-11-19</span></div>
<div class="cell" style="left:800px;width:150px"><b class="tag" style="background:#3c86d8">直播</b></div>
<div class="cell" style="left:950px;width:150px"></div>
<div class="cell" style="left:1100px;width:150px"></div>
<div class="cell num" style="left:1250px;width:150px"><span class="dg">700000</span></div>
<div class="cell num" style="left:1400px;width:150px"><span class="dg">9</span></div>
<div class="cell" style="left:1550px;width:150px"><span class="cj">暂无</span></div>
</div>
<div class="tr" style="top:422px">
<div class="cell ck" style="left:0;width:50px"><i class="cb"></i></div>
<div class="cell" style="left:50px;width:300px"><span class="tt">聚力，钜惠，巨划算</span></div>
<div class="cell" style="left:350px;width:150px"><span class="cj">聚力，钜惠，巨划算</span></div>
<div class="cell" style="left:500px;width:150px"><span class="dg">2022-06-21</span></div>
<div class="cell" style="left:650px;width:150px"><span class="dg">2022-05-07</span></div>
<div class="cell" style="left:800px;width:150px"><b class="tag" style="background:#f2619b">生态伙伴</b></div>
<div class="cell" style="left:950px;width:150px"></div>
<div class="cell" style="left:1100px;width:150px"></div>
<div class="cell num" style="left:1250px;width:150px"><span class="dg">100000</span></div>
<div class="cell num" style="left:1400px;width:150px"><span class="dg">10</span></div>
<div class="cell" style="left:1550px;width:150px"><span class="cj">暂无</span></div>
</div>
<div class="tr odd" style="top:461px">
<div class="cell ck" style="left:0;width:50px"><i class="cb"></i></div>
<div class="cell" style="left:50px;width:300px"><span class="tt">大刀阔斧，打折到底</span></div>
<div class="cell" style="left:350px;width:150px"><span class="cj">大刀阔斧，打折到底</span></div>
<div class="cell" style="left:500px;width:150px"><span class="dg">2022-06-06</span></div>
<div class="cell" style="left:650px;width:150px"><span class="dg">2022-08-19</span></div>
<div class="cell" style="left:800px;width:150px"><b class="tag" style="background:#f2a52b">品牌活动</b></div>
<div class="cell" style="left:950px;width:150px"></div>
<div class="cell" style="left:1100px;width:150px"></div>
<div class="cell num" style="left:1250px;width:150px"><span class="dg">100000</span></div>
<div class="cell num" style="left:1400px;width:150px"><span class="dg">5</span></div>
<div class="cell" style="left:1550px;width:150px"><span class="cj">暂无</span></div>
</div>
<div class="tr" style="top:500px">
<div class="cell ck" style="left:0;width:50px"><i class="cb"></i></div>
<div class="cell" style="left:50px;width:300px"><span class="tt">与国庆甲子，携手秦华章</span></div>
<div class="cell" style="left:350px;width:150px"><span class="cj">与国庆甲子，携手秦...</span></div>
<div class="cell" style="left:500px;width:150px"><span class="dg">2022-06-11</span></div>
<div class="cell" style="left:650px;width:150px"><span class="dg">2022-11-19</span></div>
<div class="cell" style="left:800px;width:150px"><b class="tag" style="background:#7cbb36">互联网广告</b></div>
<div class="cell" style="left:950px;width:150px"></div>
<div class="cell" style="left:1100px;width:150px"></div>
<div class="cell num" style="left:1250px;width:150px"><span class="dg">200000</span></div>
<div class="cell num" style="left:1400px;width:150px"><span class="dg">6</span></div>
<div class="cell" style="left:1550px;width:150px"><span class="cj">暂无</span></div>
</div>
<div class="tr odd" style="top:539px">
<div class="cell ck" style="left:0;width:50px"><i class="cb"></i></div>
<div class="cell" style="left:50px;width:300px"><span class="tt">国庆气球向，人人有奖</span></div>
<div class="cell" style="left:350px;width:150px"><span class="cj">国庆气球向，人人有奖</span></div>
<div class="cell" style="left:500px;width:150px"><span class="dg">2022-06-01</span></div>
<div class="cell" style="left:650px;width:150px"><span class="dg">2023-04-08</span></div>
<div class="cell" style="left:800px;width:150px"><b class="tag" style="background:#9b79e0">会议营销</b></div>
<div class="cell" style="left:950px;width:150px"></div>
<div class="cell" style="left:1100px;width:150px"></div>
<div class="cell num" style="left:1250px;width:150px"><span class="dg">300000</span></div>
<div class="cell num" style="left:1400px;width:150px"><span class="dg">8</span></div>
<div class="cell" style="left:1550px;width:150px"><span class="cj">暂无</span></div>
</div>
<div class="tr" style="top:578px">
<div class="cell ck" style="left:0;width:50px"><i class="cb"></i></div>
<div class="cell" style="left:50px;width:300px"><span class="tt">七夕享惠</span></div>
<div class="cell" style="left:350px;width:150px"><span class="cj">七夕享惠</span></div>
<div class="cell" style="left:500px;width:150px"><span class="dg">2022-06-30</span></div>
<div class="cell" style="left:650px;width:150px"><span class="dg">2019-10-11</span></div>
<div class="cell" style="left:800px;width:150px"><b class="tag" style="background:#3aa8b4">线下展会</b></div>
<div class="cell" style="left:950px;width:150px"></div>
<div class="cell" style="left:1100px;width:150px"></div>
<div class="cell num" style="left:1250px;width:150px"><span class="dg">400000</span></div>
<div class="cell num" style="left:1400px;width:150px"><span class="dg">12</span></div>
<div class="cell" style="left:1550px;width:150px"><span class="cj">暂无</span></div>
</div>
<div class="tr odd" style="top:617px">
<div class="cell ck" style="left:0;width:50px"><i class="cb"></i></div>
<div class="cell" style="left:50px;width:300px"><span class="tt">一周年庆</span></div>
<div class="cell" style="left:350px;width:150px"><span class="cj">一周年庆</span></div>
<div class="cell" style="left:500px;width:150px"><span class="dg">2022-06-16</span></div>
<div class="cell" style="left:650px;width:150px"><span class="dg">2021-05-07</span></div>
<div class="cell" style="left:800px;width:150px"><b class="tag" style="background:#3c86d8">直播</b></div>
<div class="cell" style="left:950px;width:150px"></div>
<div class="cell" style="left:1100px;width:150px"></div>
<div class="cell num" style="left:1250px;width:150px"><span class="dg">30000</span></div>
<div class="cell num" style="left:1400px;width:150px"><span class="dg">15</span></div>
<div class="cell" style="left:1550px;width:150px"><span class="cj">暂无</span></div>
</div>
<div class="tr" style="top:656px">
<div class="cell ck" style="left:0;width:50px"><i class="cb"></i></div>
<div class="cell" style="left:50px;width:300px"><span class="tt">金九银十，分期钜惠</span></div>
<div class="cell" style="left:350px;width:150px"><span class="cj">金九银十，分期钜惠</span></div>
<div class="cell" style="left:500px;width:150px"><span class="dg">2022-06-06</span></div>
<div class="cell" style="left:650px;width:150px"><span class="dg">2022-11-19</span></div>
<div class="cell" style="left:800px;width:150px"><b class="tag" style="background:#f2619b">生态伙伴</b></div>
<div class="cell" style="left:950px;width:150px"></div>
<div class="cell" style="left:1100px;width:150px"></div>
<div class="cell num" style="left:1250px;width:150px"><span class="dg">500000</span></div>
<div class="cell num" style="left:1400px;width:150px"><span class="dg">2</span></div>
<div class="cell" style="left:1550px;width:150px"><span class="cj">暂无</span></div>
</div>
<div class="tr odd" style="top:695px">
<div class="cell ck" style="left:0;width:50px"><i class="cb"></i></div>
<div class="cell" style="left:50px;width:300px"><span class="tt">感恩促，惠无限</span></div>
<div class="cell" style="left:350px;width:150px"><span class="cj">感恩促，惠无限</span></div>
<div class="cell" style="left:500px;width:150px"><span class="dg">2022-06-06</span></div>
<div class="cell" style="left:650px;width:150px"><span class="dg">2022-02-10</span></div>
<div class="cell" style="left:800px;width:150px"><b class="tag" style="background:#f2a52b">品牌活动</b></div>
<div class="cell" style="left:950px;width:150px"></div>
<div class="cell" style="left:1100px;width:150px"></div>
<div class="cell num" style="left:1250px;width:150px"><span class="dg">600000</span></div>
<div class="cell num" style="left:1400px;width:150px"><span class="dg">5</span></div>
<div class="cell" style="left:1550px;width:150px"><span class="cj">暂无</span></div>
</div>
<div class="vtrack"></div><div class="hscroll"></div><div class="vscroll"></div>
</div>
<div class="abs" style="left:295px;top:892px;width:30px;height:30px;border:1px solid #dcdcdc;border-radius:4px"></div>
<svg class="abs" style="left:301px;top:898px" width="18" height="18" viewBox="0 0 18 18" fill="none" stroke="#333" stroke-width="1.3" stroke-linecap="round" stroke-linejoin="round"><path d="M4.6 2.4 V15.6 M2.4 4.6 L4.6 2.4 L6.8 4.6 M2.4 13.4 L4.6 15.6 L6.8 13.4 M9 4.4 H16 M9 7.4 H16 M9 10.6 H16 M9 13.6 H16"/></svg>
<div class="abs" style="left:331px;top:892px;width:150px;height:30px;border:1px solid #dcdcdc;border-radius:4px"></div>
<div class="abs" style="left:342px;top:897px;font-size:14px;line-height:20px;color:#333;white-space:nowrap;">20 条/页</div>
<svg class="abs" style="left:458px;top:901px" width="14" height="12" viewBox="0 0 14 12" fill="none" stroke="#999" stroke-width="1.2" stroke-linecap="round" stroke-linejoin="round"><path d="M2.5 3.8 L7 8.3 L11.5 3.8"/></svg>
<div class="abs" style="left:490px;top:897px;font-size:12px;line-height:20px;color:#999;white-space:nowrap;">共20条数据</div>
<div class="abs" style="left:1692px;top:892px;width:30px;height:30px;border:1px solid #dcdcdc;border-radius:4px;text-align:center;font-size:14px;line-height:28px">1</div>
<div class="abs" style="left:1731px;top:897px;font-size:14px;line-height:20px;color:#333;white-space:nowrap;">/ 1</div>
<div class="btn30" style="left:1769px;top:892px"></div>
<svg class="abs" style="left:1774px;top:899px" width="18" height="18" viewBox="0 0 18 18" fill="none" stroke="#555" stroke-width="1.05" stroke-linecap="round" stroke-linejoin="round"><path d="M9.3 4.2 L4.6 8.8 L9.3 13.4 M15.3 4.2 L10.6 8.8 L15.3 13.4"/></svg>
<div class="btn30" style="left:1801px;top:892px"></div>
<svg class="abs" style="left:1806px;top:899px" width="18" height="18" viewBox="0 0 18 18" fill="none" stroke="#555" stroke-width="1.05" stroke-linecap="round" stroke-linejoin="round"><path d="M12.4 4.2 L7.4 8.8 L12.4 13.4"/></svg>
<div class="btn30" style="left:1833px;top:892px"></div>
<svg class="abs" style="left:1838px;top:899px" width="18" height="18" viewBox="0 0 18 18" fill="none" stroke="#555" stroke-width="1.05" stroke-linecap="round" stroke-linejoin="round"><path d="M7.2 4.2 L12.2 8.8 L7.2 13.4"/></svg>
<div class="btn30" style="left:1865px;top:892px"></div>
<svg class="abs" style="left:1870px;top:899px" width="18" height="18" viewBox="0 0 18 18" fill="none" stroke="#555" stroke-width="1.05" stroke-linecap="round" stroke-linejoin="round"><path d="M4.6 4.2 L9.3 8.8 L4.6 13.4 M10.6 4.2 L15.3 8.8 L10.6 13.4"/></svg>
<div class="abs" style="left:118px;top:545px;width:206px;height:329px;background:#fff;border-radius:4px;box-shadow:0 3px 14px rgba(0,0,0,0.16)"></div>
<div class="abs" style="left:223px;top:516px;width:47px;height:47px;border-radius:50%;background:#f8f85f"></div>
<div class="abs" style="left:238px;top:525px;width:14px;height:4px"><i style="position:absolute;left:0;top:0;width:3px;height:3px;border-radius:2px;background:#9fbd6b"></i><i style="position:absolute;left:5px;top:0;width:3px;height:3px;border-radius:2px;background:#9fbd6b"></i><i style="position:absolute;left:10px;top:0;width:3px;height:3px;border-radius:2px;background:#9fbd6b"></i></div>
<svg class="abs" style="left:238px;top:529px" width="20" height="24" viewBox="0 0 20 24"><defs><linearGradient id="hg" x1="0" y1="0" x2="1" y2="1"><stop offset="0.45" stop-color="#fff"/><stop offset="1" stop-color="#c8c8c8"/></linearGradient></defs><path d="M5.4 14.2 V2.8 C5.4 1.8 6.1 1.3 7 1.3 C7.9 1.3 8.6 1.8 8.6 2.8 V8.6 C8.6 7.6 9.2 7 10 7 C10.8 7 11.4 7.6 11.4 8.6 V9.4 C11.4 8.5 12 8 12.9 8 C13.8 8 14.4 8.5 14.4 9.4 V10.6 C14.4 9.9 15 9.4 16 9.4 C17 9.4 17.6 10 17.6 11 V17 C17.6 18.6 16.8 20.5 16 22.5 H6.2 C5.4 20.6 3.8 18.2 1.6 15.4 C0.9 14.6 1 13.4 1.8 12.8 C2.8 12.1 4 12.6 5.4 14.2 Z" fill="url(#hg)" stroke="#000" stroke-width="1.2" stroke-linejoin="round"/><path d="M8.6 8.6 V12.4 M11.4 9.4 V12.4 M14.4 10.6 V12.4" stroke="#000" stroke-width="1"/></svg>
<svg class="abs" style="left:134px;top:565px" width="16" height="16" viewBox="0 0 16 16" fill="none" stroke="#555" stroke-width="1.2" stroke-linecap="round" stroke-linejoin="round"><path d="M8 1.6 C4.2 1.6 1.4 4.4 1.4 7.8 C1.4 11.4 4 14.4 6.4 14.4 C8 14.4 7.4 12.2 8.6 11.6 C10 11 14.6 12.4 14.6 7.8 C14.6 4.4 11.8 1.6 8 1.6 Z"/><circle cx="5" cy="7" r="0.9"/><circle cx="7.6" cy="4.6" r="0.9"/><circle cx="10.6" cy="5.4" r="0.9"/><circle cx="11.4" cy="8.6" r="0.9"/></svg>
<div class="abs" style="left:156px;top:563px;font-size:14px;line-height:20px;color:#666;white-space:nowrap;">修改样式</div>
<svg class="abs" style="left:134px;top:601px" width="16" height="16" viewBox="0 0 16 16" fill="none" stroke="#555" stroke-width="1.2" stroke-linecap="round" stroke-linejoin="round"><path d="M1.6 14.8 H14.4 M3.4 12.4 L4 9.6 L11 2.6 L13.2 4.8 L6.2 11.8 Z"/></svg>
<div class="abs" style="left:156px;top:599px;font-size:14px;line-height:20px;color:#666;white-space:nowrap;">修改名称</div>
<svg class="abs" style="left:134px;top:637px" width="16" height="16" viewBox="0 0 16 16" fill="none" stroke="#555" stroke-width="1.2" stroke-linecap="round" stroke-linejoin="round"><path d="M8 1.4 V14.6 M1.4 8 H14.6 M6.2 3.2 L8 1.4 L9.8 3.2 M6.2 12.8 L8 14.6 L9.8 12.8 M3.2 6.2 L1.4 8 L3.2 9.8 M12.8 6.2 L14.6 8 L12.8 9.8"/></svg>
<div class="abs" style="left:156px;top:635px;font-size:14px;line-height:20px;color:#666;white-space:nowrap;">移动</div>
<svg class="abs" style="left:134px;top:673px" width="16" height="16" viewBox="0 0 16 16" fill="none" stroke="#555" stroke-width="1.2" stroke-linecap="round" stroke-linejoin="round"><path d="M15 5.5 H1.2 L5.6 2.3 M1.2 10.3 H15 L10.6 13.5"/></svg>
<div class="abs" style="left:156px;top:671px;font-size:14px;line-height:20px;color:#666;white-space:nowrap;">切换为流程表单</div>
<svg class="abs" style="left:134px;top:709px" width="16" height="16" viewBox="0 0 16 16" fill="none" stroke="#555" stroke-width="1.2" stroke-linecap="round" stroke-linejoin="round"><path d="M15 5.5 H1.2 L5.6 2.3 M1.2 10.3 H15 L10.6 13.5"/></svg>
<div class="abs" style="left:156px;top:707px;font-size:14px;line-height:20px;color:#666;white-space:nowrap;">切换为事件表单</div>
<svg class="abs" style="left:134px;top:765px" width="16" height="16" viewBox="0 0 16 16" fill="none" stroke="#555" stroke-width="1.2" stroke-linecap="round" stroke-linejoin="round"><rect x="4.4" y="4.4" width="10" height="10" rx="1.5"/><path d="M2 11.6 V3.4 a1.5 1.5 0 0 1 1.5 -1.5 H11.6"/></svg>
<div class="abs" style="left:156px;top:763px;font-size:14px;line-height:20px;color:#666;white-space:nowrap;">复制到当前应用</div>
<svg class="abs" style="left:134px;top:801px" width="16" height="16" viewBox="0 0 16 16" fill="none" stroke="#555" stroke-width="1.2" stroke-linecap="round" stroke-linejoin="round"><rect x="4.4" y="4.4" width="10" height="10" rx="1.5"/><path d="M2 11.6 V3.4 a1.5 1.5 0 0 1 1.5 -1.5 H11.6"/></svg>
<div class="abs" style="left:156px;top:799px;font-size:14px;line-height:20px;color:#666;white-space:nowrap;">复制到其他应用</div>
<svg class="abs" style="left:134px;top:837px" width="16" height="16" viewBox="0 0 16 16" fill="none" stroke="#f05a3e" stroke-width="1.2" stroke-linecap="round" stroke-linejoin="round"><path d="M1.6 4 H14.4 M5.4 4 V2 H10.6 V4 M3.2 4 L4.2 14.6 H11.8 L12.8 4 M6.6 6.6 V12 M9.4 6.6 V12"/></svg>
<div class="abs" style="left:156px;top:835px;font-size:14px;line-height:20px;color:#f05a3e;white-space:nowrap;">删除</div>
<div class="abs" style="left:118px;top:745px;width:206px;height:1px;background:#e8e8e8"></div>
<div class="abs" style="left:121px;top:668px;width:180px;height:71px;border:2px solid #4a7bb7"></div>

</body></html>
